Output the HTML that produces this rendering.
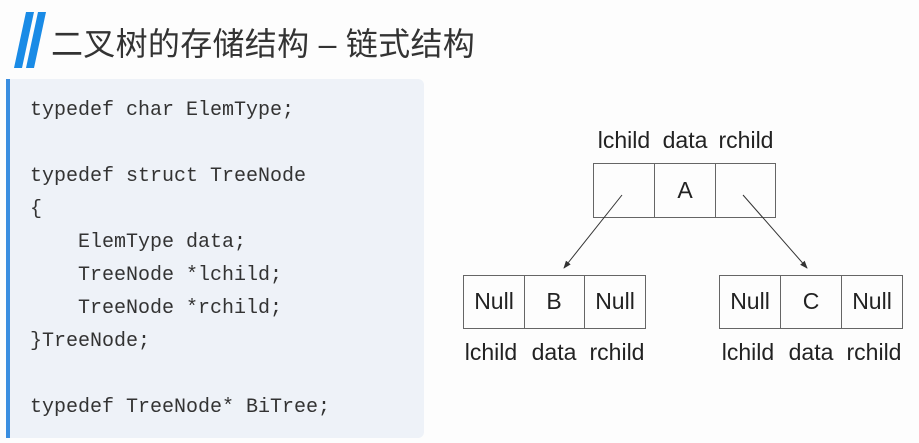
<!DOCTYPE html>
<html><head><meta charset="utf-8"><style>
body{margin:0;width:919px;height:443px;background:#fdfdfd;position:relative;overflow:hidden;font-family:"Liberation Sans",sans-serif}
.t{position:absolute;left:51px;top:22px;font-size:32px;color:#333;font-family:"Liberation Sans","Noto Sans CJK SC",sans-serif;line-height:44px;white-space:nowrap;letter-spacing:0.3px}
.panel{position:absolute;left:6px;top:79px;width:414px;height:359px;background:#eef2f8;border-radius:0 6px 6px 0;border-left:4px solid #3a8ee0}
pre{position:absolute;left:30px;top:94px;margin:0;font-family:"Liberation Mono",monospace;font-size:20px;line-height:33px;color:#333}
</style></head><body>
<svg style="position:absolute;left:0;top:0" width="60" height="75"><polygon points="26,12 34,12 22,68 14,68" fill="#1a8be6"/><polygon points="38,12 46,12 34,68 26,68" fill="#1a8be6"/></svg>
<div class="t">二叉树的存储结构 – 链式结构</div>
<div class="panel"></div>
<pre>typedef char ElemType;

typedef struct TreeNode
{
    ElemType data;
    TreeNode *lchild;
    TreeNode *rchild;
}TreeNode;

typedef TreeNode* BiTree;</pre>
<svg style="position:absolute;left:0;top:0" width="919" height="443" font-family="Liberation Sans" font-size="23" fill="#222">
<defs><marker id="a" markerWidth="8" markerHeight="8" refX="7" refY="4" orient="auto"><path d="M0,1 L8,4 L0,7 Z" fill="#333"/></marker></defs>
<g stroke="#666" stroke-width="1" fill="none">
<rect x="593.5" y="163.5" width="182" height="54"/><line x1="654.5" y1="163" x2="654.5" y2="217"/><line x1="715.5" y1="163" x2="715.5" y2="217"/>
<rect x="463.5" y="275.5" width="182" height="53"/><line x1="524.5" y1="275" x2="524.5" y2="328"/><line x1="584.5" y1="275" x2="584.5" y2="328"/>
<rect x="719.5" y="275.5" width="183" height="53"/><line x1="780.5" y1="275" x2="780.5" y2="328"/><line x1="841.5" y1="275" x2="841.5" y2="328"/>
</g>
<line x1="622" y1="195" x2="564" y2="268" stroke="#333" marker-end="url(#a)"/>
<line x1="743" y1="195" x2="807" y2="268" stroke="#333" marker-end="url(#a)"/>
<g text-anchor="middle">
<text x="624" y="148">lchild</text><text x="685" y="148">data</text><text x="746" y="148">rchild</text>
<text x="685" y="198">A</text>
<text x="494" y="309">Null</text><text x="554" y="309">B</text><text x="615" y="309">Null</text>
<text x="750" y="309">Null</text><text x="811" y="309">C</text><text x="872" y="309">Null</text>
<text x="491" y="360">lchild</text><text x="554" y="360">data</text><text x="617" y="360">rchild</text>
<text x="748" y="360">lchild</text><text x="811" y="360">data</text><text x="874" y="360">rchild</text>
</g></svg>
</body></html>
